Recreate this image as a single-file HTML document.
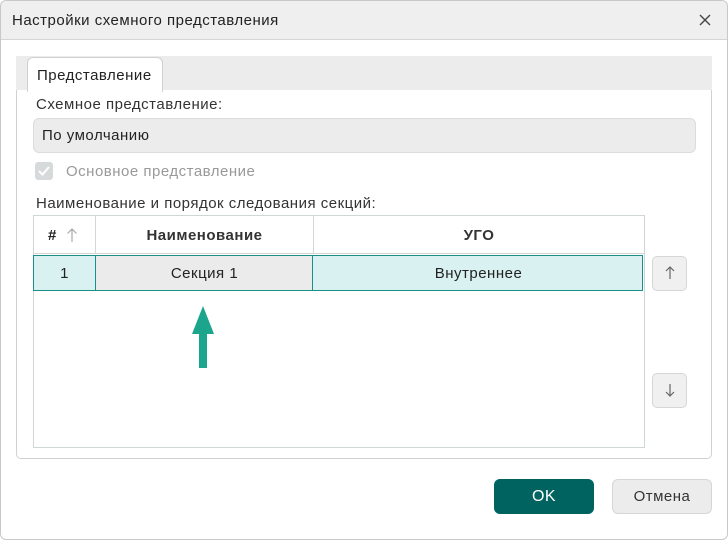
<!DOCTYPE html>
<html><head><meta charset="utf-8"><style>
*{box-sizing:border-box;margin:0;padding:0}
body{width:728px;height:540px;background:#fff;font-family:"Liberation Sans","DejaVu Sans",sans-serif;font-size:15px;letter-spacing:0.5px;color:#222;position:relative;overflow:hidden}
.a{position:absolute}
</style></head><body>
<div class="a" style="left:0;top:0;width:728px;height:540px;border:1px solid #c8c8c8;border-radius:6px"></div>
<div class="a" style="left:1px;top:1px;width:726px;height:39px;background:#efefef;border-bottom:1px solid #d6d6d6;border-radius:6px 6px 0 0"></div>
<div class="a" style="left:12px;top:12px;font-size:15px">Настройки схемного представления</div>
<svg class="a" style="left:698px;top:13px" width="14" height="14"><path d="M2 2L12 12M12 2L2 12" stroke="#444" stroke-width="1.4"/></svg>
<div class="a" style="left:16px;top:56px;width:696px;height:35px;background:#ececec"></div>
<div class="a" style="left:16px;top:90px;width:696px;height:369px;border:1px solid #d0d0d0;border-top:none;border-radius:0 0 5px 5px;background:#fff"></div>
<div class="a" style="left:27px;top:57px;width:136px;height:35px;background:#fff;border:1px solid #d0d0d0;border-bottom:none;border-radius:6px 6px 0 0"></div>
<div class="a" style="left:37px;top:67px">Представление</div>
<div class="a" style="left:36px;top:96px;color:#333">Схемное представление:</div>
<div class="a" style="left:33px;top:118px;width:663px;height:35px;background:#ececec;border:1px solid #dcdcdc;border-radius:6px"></div>
<div class="a" style="left:42px;top:127px">По умолчанию</div>
<div class="a" style="left:35px;top:162px;width:18px;height:18px;background:#d7dada;border-radius:3px"></div>
<svg class="a" style="left:35px;top:162px" width="18" height="18"><path d="M4 9l3.5 3.5L14 5" stroke="#fff" stroke-width="2" fill="none"/></svg>
<div class="a" style="left:66px;top:163px;color:#999">Основное представление</div>
<div class="a" style="left:36px;top:195px;color:#333">Наименование и порядок следования секций:</div>
<div class="a" style="left:33px;top:215px;width:612px;height:233px;border:1px solid #cfd6d6"></div>
<div class="a" style="left:95px;top:216px;width:1px;height:37px;background:#d6d6d6"></div>
<div class="a" style="left:313px;top:216px;width:1px;height:37px;background:#d6d6d6"></div>
<div class="a" style="left:34px;top:253px;width:610px;height:1px;background:#d6d6d6"></div>
<div class="a" style="left:48px;top:227px;font-weight:bold">#</div>
<svg class="a" style="left:66px;top:227px" width="12" height="16"><path d="M6 15V2M1.5 6.5L6 2l4.5 4.5" stroke="#aaa" stroke-width="1.2" fill="none"/></svg>
<div class="a" style="left:96px;top:227px;width:217px;text-align:center;font-weight:bold;color:#333">Наименование</div>
<div class="a" style="left:314px;top:227px;width:330px;text-align:center;font-weight:bold;color:#333">УГО</div>
<div class="a" style="left:33px;top:255px;width:610px;height:36px;background:#d9f1f1;border:1px solid #1a8f8a"></div>
<div class="a" style="left:95px;top:256px;width:218px;height:34px;background:#ebebeb;border-left:1px solid #1a8f8a;border-right:1px solid #1a8f8a"></div>
<div class="a" style="left:34px;top:265px;width:61px;text-align:center">1</div>
<div class="a" style="left:96px;top:265px;width:217px;text-align:center">Секция 1</div>
<div class="a" style="left:314px;top:265px;width:329px;text-align:center">Внутреннее</div>
<svg class="a" style="left:190px;top:304px" width="26" height="66"><path d="M13 2L24 30H17V64H9V30H2Z" fill="#1aa58c"/></svg>
<div class="a" style="left:652px;top:256px;width:35px;height:35px;background:#f0f0f0;border:1px solid #d6d6d6;border-radius:5px"></div>
<svg class="a" style="left:663px;top:265px" width="14" height="16"><path d="M7 14V2M3 6l4-4 4 4" stroke="#666" stroke-width="1.2" fill="none"/></svg>
<div class="a" style="left:652px;top:373px;width:35px;height:35px;background:#f0f0f0;border:1px solid #d6d6d6;border-radius:5px"></div>
<svg class="a" style="left:663px;top:382px" width="14" height="16"><path d="M7 2V14M3 10l4 4 4-4" stroke="#666" stroke-width="1.2" fill="none"/></svg>
<div class="a" style="left:494px;top:479px;width:100px;height:35px;background:#006360;border-radius:6px;color:#fff;text-align:center;line-height:35px;font-size:16px">OK</div>
<div class="a" style="left:612px;top:479px;width:100px;height:35px;background:#ececec;border:1px solid #d6d6d6;border-radius:6px;color:#333;text-align:center;line-height:33px">Отмена</div>
</body></html>
